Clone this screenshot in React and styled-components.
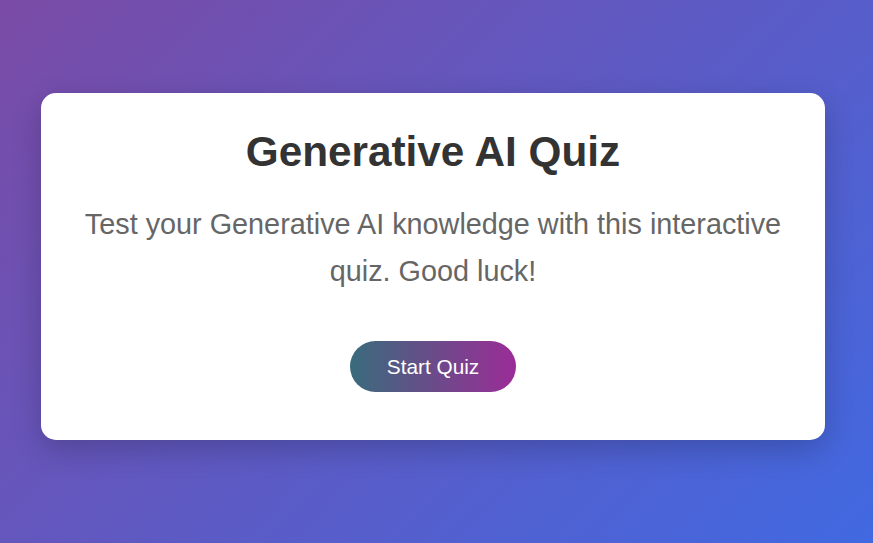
import React from 'react';
import styled, { createGlobalStyle } from 'styled-components';

const GlobalStyle = createGlobalStyle`
  html, body {
    margin: 0;
    padding: 0;
    height: 100%;
  }

  body {
    font-family: "Liberation Sans", Arial, sans-serif;
    background: linear-gradient(135deg, #7a4ba6 0%, #4169e1 100%);
    background-attachment: fixed;
  }

  #root {
    min-height: 100%;
  }
`;

const Page = styled.div`
  min-height: 100vh;
  box-sizing: border-box;
  display: flex;
  align-items: center;
  padding: 0 48px 10px 41px;
`;

const Card = styled.div`
  flex: 1;
  box-sizing: border-box;
  background-color: #fff;
  border-radius: 15px;
  padding: 34px 40px 48px;
  box-shadow: 0 10px 30px rgba(0, 0, 0, 0.2);
  text-align: center;
`;

const Title = styled.h1`
  margin: 0 0 24px;
  font-size: 42.3px;
  line-height: 50px;
  font-weight: 700;
  color: #333;
`;

const Intro = styled.p`
  margin: 0 0 47px;
  font-size: 28.8px;
  line-height: 1.6;
  color: #666;
`;

const StartButton = styled.button`
  -webkit-appearance: none;
  border: none;
  cursor: pointer;
  font-family: inherit;
  font-size: 20.8px;
  line-height: 23px;
  padding: 14px 37px;
  border-radius: 30px;
  color: #fff;
  background: linear-gradient(90deg, #396b7c 0%, #9b2c97 100%);
`;

export default function App() {
  return (
    <>
      <GlobalStyle />
      <Page>
        <Card>
          <Title>Generative AI Quiz</Title>
          <Intro>
            Test your Generative AI knowledge with this interactive quiz. Good luck!
          </Intro>
          <StartButton>Start Quiz</StartButton>
        </Card>
      </Page>
    </>
  );
}
